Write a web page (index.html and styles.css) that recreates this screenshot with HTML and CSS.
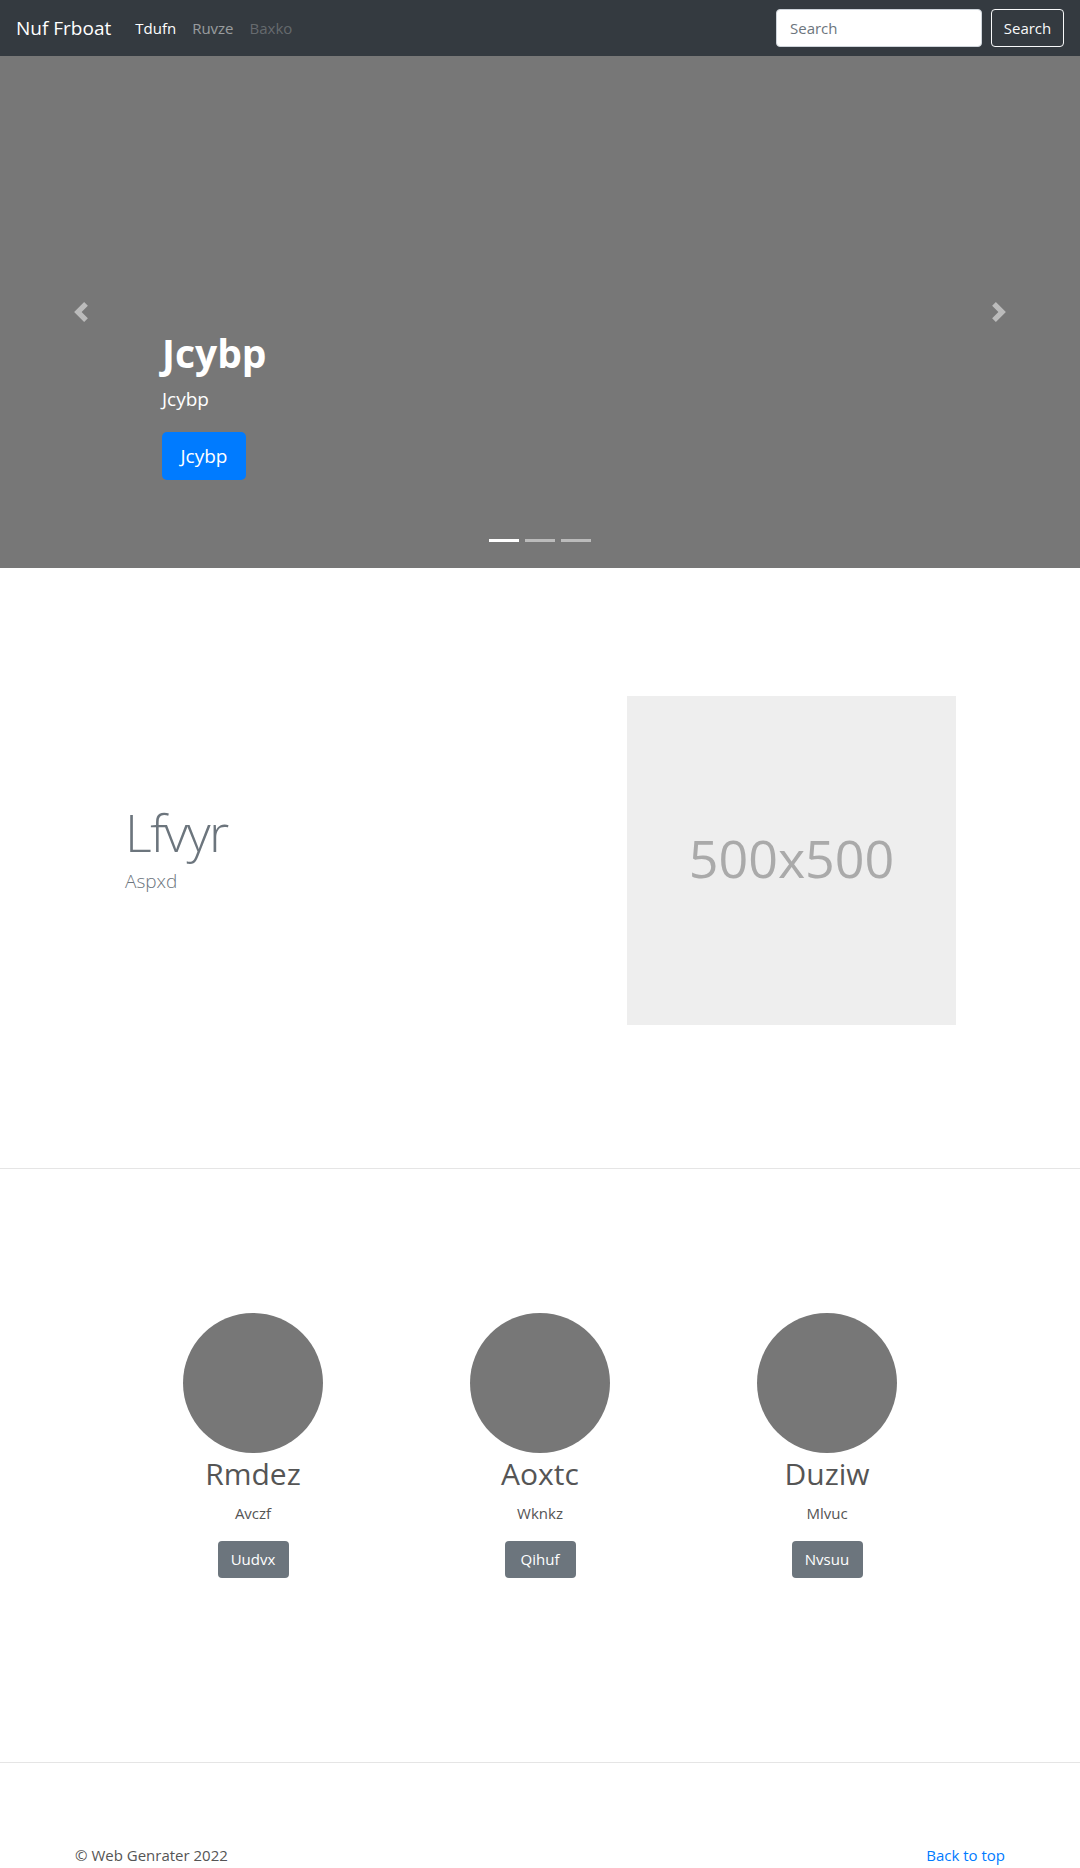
FILE: index.html
```html
<!DOCTYPE html>
<html lang="en">
<head>
<meta charset="utf-8">
<title>Nuf Frboat</title>
<link rel="stylesheet" href="styles.css">
</head>
<body>
<header class="navbar">
  <a class="brand" href="#">Nuf Frboat</a>
  <nav class="nav">
    <a class="nav-link active" href="#">Tdufn</a>
    <a class="nav-link" href="#">Ruvze</a>
    <a class="nav-link disabled" href="#">Baxko</a>
  </nav>
  <form class="search">
    <input class="search-input" type="text" placeholder="Search">
    <button class="btn-outline" type="button">Search</button>
  </form>
</header>

<main>
  <section class="carousel">
    <ol class="indicators">
      <li class="active"></li>
      <li></li>
      <li></li>
    </ol>
    <div class="caption">
      <h1 class="caption-title">Jcybp</h1>
      <p class="caption-lead">Jcybp</p>
      <p class="caption-action"><a class="btn-primary" href="#">Jcybp</a></p>
    </div>
    <a class="control control-prev" href="#">
      <svg width="20" height="20" viewBox="0 0 8 8"><path fill="#fff" d="M5.25 0l-4 4 4 4 1.5-1.5L4.25 4l2.5-2.5L5.25 0z"/></svg>
    </a>
    <a class="control control-next" href="#">
      <svg width="20" height="20" viewBox="0 0 8 8"><path fill="#fff" d="M2.75 0l-1.5 1.5L3.75 4l-2.5 2.5L2.75 8l4-4-4-4z"/></svg>
    </a>
  </section>

  <section class="featurette">
    <div class="featurette-text">
      <h2 class="featurette-heading">Lfvyr</h2>
      <p class="featurette-lead">Aspxd</p>
    </div>
    <div class="placeholder">500x500</div>
  </section>

  <hr class="divider">

  <section class="marketing">
    <div class="person">
      <div class="avatar"></div>
      <h2 class="person-name">Rmdez</h2>
      <p class="person-text">Avczf</p>
      <a class="btn-secondary" href="#">Uudvx</a>
    </div>
    <div class="person">
      <div class="avatar"></div>
      <h2 class="person-name">Aoxtc</h2>
      <p class="person-text">Wknkz</p>
      <a class="btn-secondary" href="#">Qihuf</a>
    </div>
    <div class="person">
      <div class="avatar"></div>
      <h2 class="person-name">Duziw</h2>
      <p class="person-text">Mlvuc</p>
      <a class="btn-secondary" href="#">Nvsuu</a>
    </div>
  </section>

  <hr class="divider">

  <footer class="footer">
    <p class="copy">© Web Genrater 2022</p>
    <a class="back" href="#">Back to top</a>
  </footer>
</main>
</body>
</html>
```

FILE: styles.css
```css
* { box-sizing: border-box; }

html, body {
  margin: 0;
  padding: 0;
}

body {
  font-family: "Open Sans", "Noto Sans", "Liberation Sans", sans-serif;
  font-size: 16px;
  line-height: 1.5;
  color: #212529;
  background: #fff;
}

a { text-decoration: none; }

/* Navbar */
.navbar {
  height: 56px;
  background: #343a40;
  display: flex;
  align-items: center;
  padding: 0 16px;
}

.brand {
  color: #fff;
  font-size: 19px;
  line-height: 30px;
  margin-right: 16px;
}

.nav {
  display: flex;
}

.nav-link {
  padding: 0 8px;
  color: rgba(255, 255, 255, 0.5);
  font-size: 15px;
  line-height: 24px;
}

.nav-link.active { color: #fff; }
.nav-link.disabled { color: rgba(255, 255, 255, 0.25); }

.search {
  margin-left: auto;
  display: flex;
  gap: 9px;
}

.search-input {
  width: 206px;
  height: 38px;
  border: 1px solid #ced4da;
  border-radius: 4px;
  padding: 6px 13px;
  font-family: inherit;
  font-size: 15px;
  color: #495057;
  background: #fff;
}

.search-input::placeholder { color: #6c757d; }

.btn-outline {
  width: 73px;
  height: 38px;
  border: 1px solid #f8f9fa;
  border-radius: 4px;
  background: transparent;
  color: #f8f9fa;
  font-family: inherit;
  font-size: 15px;
  padding: 0;
}

/* Carousel */
.carousel {
  position: relative;
  height: 512px;
  background: #777;
}

.caption {
  position: absolute;
  left: 15%;
  right: 15%;
  bottom: 54px;
  padding: 20px 0;
  color: #fff;
}

.caption-title {
  margin: 0 0 7px;
  font-size: 39px;
  font-weight: 700;
  line-height: 48px;
}

.caption-lead {
  margin: 0 0 18px;
  font-size: 19px;
  line-height: 30px;
}

.caption-action {
  margin: 0 0 14px;
  height: 48px;
}

.btn-primary {
  display: block;
  width: 84px;
  height: 48px;
  line-height: 48px;
  text-align: center;
  background: #007bff;
  color: #fff;
  border-radius: 5px;
  font-size: 19px;
}

.indicators {
  position: absolute;
  left: 0;
  right: 0;
  bottom: 16px;
  margin: 0;
  padding: 0;
  list-style: none;
  display: flex;
  justify-content: center;
}

.indicators li {
  width: 30px;
  height: 23px;
  margin: 0 3px;
  border-top: 10px solid transparent;
  border-bottom: 10px solid transparent;
  background: rgba(255, 255, 255, 0.5);
  background-clip: padding-box;
}

.indicators li.active { background-color: #fff; }

.control {
  position: absolute;
  top: 0;
  bottom: 0;
  width: 15%;
  display: flex;
  align-items: center;
  justify-content: center;
  opacity: 0.5;
}

.control-prev { left: 0; }
.control-next { right: 0; }

/* Featurette */
.featurette {
  width: 930px;
  margin: 0 auto;
  padding: 128px 0 143px;
  display: flex;
  align-items: center;
}

.featurette-text {
  flex: 1;
  padding-left: 50px;
}

.featurette-heading {
  margin: 0 0 6px;
  font-size: 52px;
  font-weight: 300;
  line-height: 56px;
  color: #6c757d;
  letter-spacing: -1.5px;
}

.featurette-lead {
  margin: 0 0 22px;
  font-size: 19px;
  font-weight: 300;
  line-height: 30px;
  color: #6c757d;
}

.placeholder {
  width: 329px;
  height: 329px;
  margin-right: 49px;
  padding-bottom: 6px;
  background: #eee;
  color: #aaa;
  font-size: 52px;
  display: flex;
  align-items: center;
  justify-content: center;
}

.divider {
  margin: 0;
  border: 0;
  border-top: 1px solid rgba(0, 0, 0, 0.1);
}

/* Marketing */
.marketing {
  width: 861px;
  margin: 0 auto;
  padding: 144px 0 184px;
  display: grid;
  grid-template-columns: repeat(3, 1fr);
  text-align: center;
}

.person {
  display: flex;
  flex-direction: column;
  align-items: center;
}

.avatar {
  width: 140px;
  height: 140px;
  border-radius: 50%;
  background: #777;
  margin-bottom: 2px;
}

.person-name {
  margin: 0 0 8px;
  font-size: 30px;
  font-weight: 400;
  line-height: 38px;
  color: #555;
}

.person-text {
  margin: 0 0 16px;
  font-size: 15px;
  line-height: 24px;
  color: #555;
}

.btn-secondary {
  display: inline-block;
  padding: 0 12px;
  height: 37px;
  line-height: 37px;
  min-width: 71px;
  background: #6c757d;
  color: #fff;
  border-radius: 4px;
  font-size: 15px;
}

/* Footer */
.footer {
  width: 930px;
  margin: 0 auto;
  padding-top: 80px;
  display: flex;
  justify-content: space-between;
  font-size: 15px;
  line-height: 24px;
}

.copy {
  margin: 0 0 16px;
  color: #555;
}

.back {
  color: #007bff;
}
```
